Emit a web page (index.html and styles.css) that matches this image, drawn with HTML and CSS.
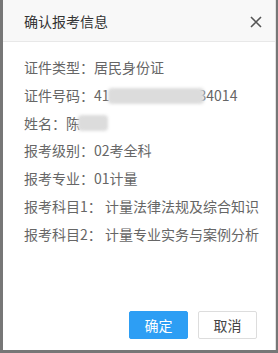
FILE: index.html
```html
<!DOCTYPE html>
<html lang="zh">
<head>
  <meta charset="UTF-8">
  <title>确认报考信息</title>
  <link rel="stylesheet" href="styles.css">
</head>
<body>

  <div class="dialog">
    <div class="dialog-head">
      <span class="dialog-title">确认报考信息</span>
      <span class="dialog-close">
        <svg width="12" height="12" viewBox="0 0 12 12">
          <path d="M1 1 L11 11 M11 1 L1 11" stroke="#555" stroke-width="1.6" fill="none"/>
        </svg>
      </span>
    </div>

    <div class="dialog-body">
      <p>证件类型：居民身份证</p>
      <p>证件号码：41<span class="mask mask-id"></span>34014</p>
      <p>姓名：陈<span class="mask mask-name"></span></p>
      <p>报考级别：02考全科</p>
      <p>报考专业：01计量</p>
      <p>报考科目1： 计量法律法规及综合知识</p>
      <p>报考科目2： 计量专业实务与案例分析</p>
    </div>

    <div class="dialog-foot">
      <button class="btn btn-ok">确定</button>
      <button class="btn btn-cancel">取消</button>
    </div>
  </div>

</body>
</html>
```

FILE: styles.css
```css
body {
  margin: 0;
  background-color: #777;
  font-family: "Noto Sans CJK SC", "Noto Sans", sans-serif;
  width: 278px;
  height: 353px;
  overflow: hidden;
}

.dialog {
  margin-left: 3px;
  width: 272px;
  height: 350px;
  background: #fff;
  border-right: 1px solid #e2e2e2;
  display: flex;
  flex-direction: column;
}

.dialog-head {
  height: 41px;
  background: #f8f8f8;
  border-bottom: 1px solid #e8e8e8;
  display: flex;
  align-items: center;
  justify-content: space-between;
  padding: 0 13px 0 21px;
}

.dialog-title {
  font-size: 14px;
  color: #333;
}

.dialog-close {
  display: flex;
  padding-top: 2px;
}

.dialog-body {
  padding: 12px 0 0 21px;
  flex: 1;
}

.dialog-body p {
  margin: 0;
  font-size: 14px;
  line-height: 27.8px;
  color: #666;
  white-space: nowrap;
}

.mask {
  position: relative;
  display: inline-block;
  vertical-align: middle;
  height: 16px;
  background: #dcdcdc;
  border-radius: 4px;
  filter: blur(1.5px);
  margin-top: -3px;
}

.mask-id {
  width: 96px;
  margin-left: -2px;
  margin-right: -5px;
}

.mask-name {
  width: 30px;
  margin-left: -2px;
}

.dialog-foot {
  display: flex;
  justify-content: flex-end;
  gap: 10px;
  padding: 0 18px 11px 0;
}

.btn {
  width: 59px;
  height: 28px;
  font-family: inherit;
  font-size: 14px;
  border-radius: 2px;
  cursor: pointer;
}

.btn-ok {
  background: #2d9ef4;
  color: #fff;
  border: 1px solid #2d9ef4;
}

.btn-cancel {
  background: #fff;
  color: #444;
  border: 1px solid #ddd;
}
```
